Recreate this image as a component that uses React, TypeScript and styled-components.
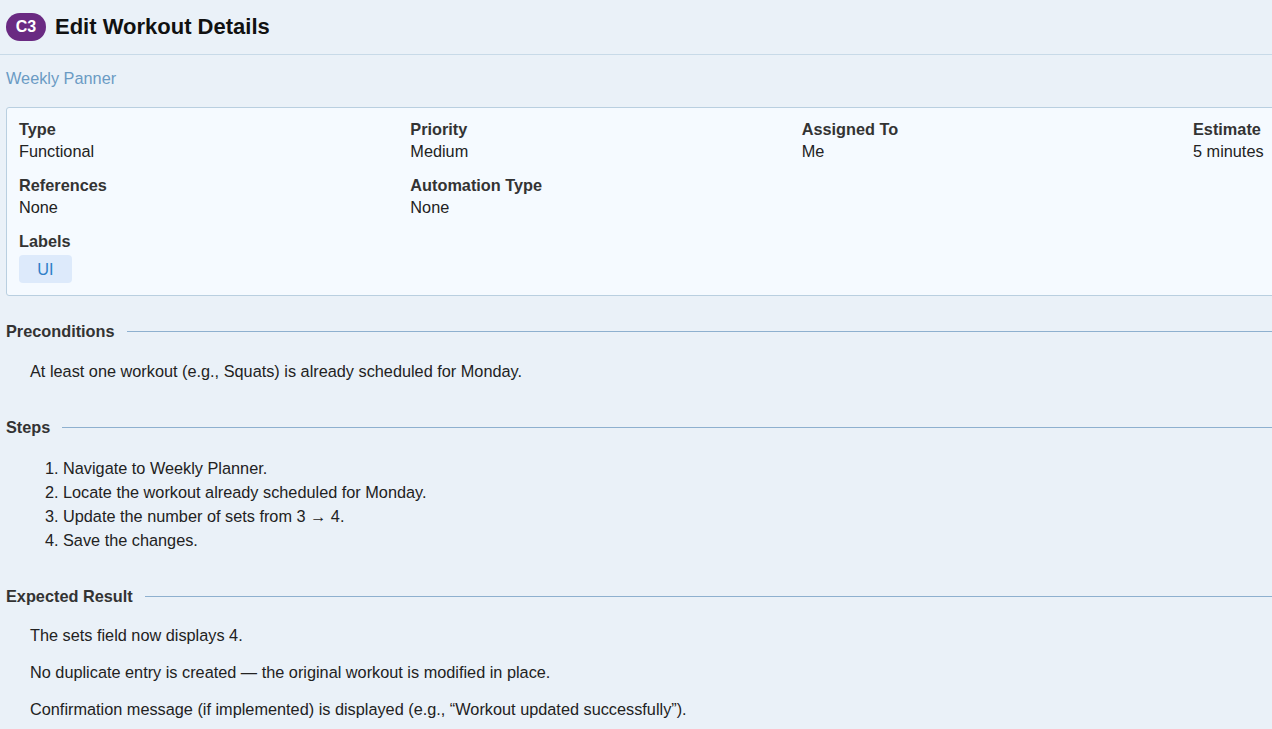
import React from "react";
import styled, { createGlobalStyle } from "styled-components";

const GlobalStyle = createGlobalStyle`
  html, body {
    margin: 0;
    padding: 0;
    background: #eaf1f8;
    overflow: hidden;
  }
  body {
    font-family: "Liberation Sans", Arial, sans-serif;
    color: #222;
  }
`;

const Page = styled.div`
  width: 1602px;
  padding: 0 6px;
  box-sizing: border-box;
`;

const Header = styled.header`
  display: flex;
  align-items: center;
  gap: 9px;
  height: 55px;
  border-bottom: 1px solid #c8dae8;
  margin: 0 -6px;
  padding: 0 6px;
  box-sizing: border-box;
`;

const Badge = styled.span`
  display: inline-flex;
  align-items: center;
  justify-content: center;
  width: 40px;
  height: 28px;
  border-radius: 14px;
  background: #6a2a82;
  color: #fff;
  font-weight: 700;
  font-size: 16px;
`;

const Title = styled.h1`
  margin: 0;
  font-size: 22px;
  font-weight: 700;
  color: #111;
`;

const Project = styled.div`
  margin-top: 12px;
  line-height: 22px;
  font-size: 16.3px;
  color: #6a9bc4;
`;

const Card = styled.section`
  margin-top: 18px;
  background: #f5faff;
  border: 1px solid #b9cfe0;
  border-radius: 3px;
  padding: 10px 12px 12px;
  display: grid;
  grid-template-columns: repeat(4, 391.33px);
  row-gap: 12px;
`;

const Field = styled.div`
  display: flex;
  flex-direction: column;
  align-items: flex-start;
`;

const FieldLabel = styled.div`
  font-size: 16.3px;
  line-height: 22px;
  font-weight: 700;
  color: #333;
`;

const FieldValue = styled.div`
  font-size: 16.3px;
  line-height: 22px;
  color: #222;
`;

const Chip = styled.span`
  margin-top: 3px;
  display: inline-flex;
  align-items: center;
  justify-content: center;
  width: 53px;
  height: 28px;
  border-radius: 4px;
  background: #ddeafb;
  color: #2f7fc8;
  font-size: 16.3px;
`;

const Spacer = styled.div``;

const SectionHead = styled.div<{ $top: number }>`
  display: flex;
  align-items: center;
  gap: 12px;
  margin-top: ${(p) => p.$top}px;
  margin-right: -330px;
`;

const SectionTitle = styled.h2`
  margin: 0;
  font-size: 16.3px;
  line-height: 22px;
  font-weight: 700;
  color: #333;
  white-space: nowrap;
`;

const Rule = styled.div`
  flex: 1;
  height: 1px;
  background: #8eb0cf;
`;

const Para = styled.p<{ $top: number }>`
  margin: ${(p) => p.$top}px 0 0 24px;
  font-size: 16.3px;
  line-height: 22px;
  color: #222;
`;

const Steps = styled.ol`
  margin: 18px 0 0;
  padding-left: 57px;
  font-size: 16.3px;
  line-height: 24px;
  color: #222;
`;

export default function App() {
  return (
    <>
      <GlobalStyle />
      <Page>
        <Header>
          <Badge>C3</Badge>
          <Title>Edit Workout Details</Title>
        </Header>
        <Project>Weekly Panner</Project>
        <Card>
          <Field>
            <FieldLabel>Type</FieldLabel>
            <FieldValue>Functional</FieldValue>
          </Field>
          <Field>
            <FieldLabel>Priority</FieldLabel>
            <FieldValue>Medium</FieldValue>
          </Field>
          <Field>
            <FieldLabel>Assigned To</FieldLabel>
            <FieldValue>Me</FieldValue>
          </Field>
          <Field>
            <FieldLabel>Estimate</FieldLabel>
            <FieldValue>5 minutes</FieldValue>
          </Field>
          <Field>
            <FieldLabel>References</FieldLabel>
            <FieldValue>None</FieldValue>
          </Field>
          <Field>
            <FieldLabel>Automation Type</FieldLabel>
            <FieldValue>None</FieldValue>
          </Field>
          <Spacer />
          <Spacer />
          <Field>
            <FieldLabel>Labels</FieldLabel>
            <Chip>UI</Chip>
          </Field>
        </Card>

        <SectionHead $top={24}>
          <SectionTitle>Preconditions</SectionTitle>
          <Rule />
        </SectionHead>
        <Para $top={18}>At least one workout (e.g., Squats) is already scheduled for Monday.</Para>

        <SectionHead $top={34}>
          <SectionTitle>Steps</SectionTitle>
          <Rule />
        </SectionHead>
        <Steps>
          <li>Navigate to Weekly Planner.</li>
          <li>Locate the workout already scheduled for Monday.</li>
          <li>Update the number of sets from 3 → 4.</li>
          <li>Save the changes.</li>
        </Steps>

        <SectionHead $top={33}>
          <SectionTitle>Expected Result</SectionTitle>
          <Rule />
        </SectionHead>
        <Para $top={17}>The sets field now displays 4.</Para>
        <Para $top={15}>No duplicate entry is created — the original workout is modified in place.</Para>
        <Para $top={15}>Confirmation message (if implemented) is displayed (e.g., “Workout updated successfully”).</Para>
      </Page>
    </>
  );
}
